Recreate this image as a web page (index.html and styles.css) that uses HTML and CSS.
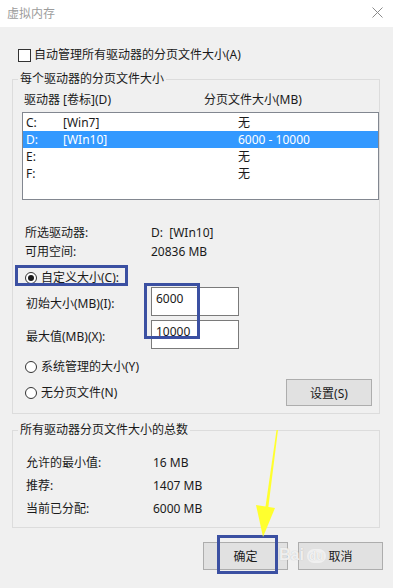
FILE: index.html
```html
<!DOCTYPE html>
<html lang="zh-CN">

<head>
    <meta charset="UTF-8">
    <meta name="viewport" content="width=device-width, initial-scale=1.0">
    <title>虚拟内存</title>
    <link rel="stylesheet" href="styles.css">
</head>

<body>
    <div class="titlebar">
        <span class="title">虚拟内存</span>
        <svg class="close" width="11" height="11" viewBox="0 0 11 11">
            <path d="M0.5 0.5 L10.5 10.5 M10.5 0.5 L0.5 10.5" stroke="#8a8a8a" stroke-width="1" fill="none" />
        </svg>
    </div>

    <div class="dialog">
        <div class="auto-row">
            <span class="checkbox"></span>
            <span>自动管理所有驱动器的分页文件大小(A)</span>
        </div>

        <fieldset class="group group-drives">
            <legend>每个驱动器的分页文件大小</legend>
            <div class="list-head">
                <span>驱动器 [卷标](D)</span>
                <span>分页文件大小(MB)</span>
            </div>
            <div class="listbox">
                <div class="list-row"><span>C:</span><span>[Win7]</span><span>无</span></div>
                <div class="list-row selected"><span>D:</span><span>[WIn10]</span><span>6000 - 10000</span></div>
                <div class="list-row"><span>E:</span><span></span><span>无</span></div>
                <div class="list-row"><span>F:</span><span></span><span>无</span></div>
            </div>

            <div class="info">
                <div class="info-row"><span>所选驱动器:</span><span>D:&nbsp; [WIn10]</span></div>
                <div class="info-row"><span>可用空间:</span><span>20836 MB</span></div>
            </div>

            <div class="radio-row first">
                <span class="radio checked"></span>
                <span>自定义大小(C):</span>
            </div>
            <div class="size-row">
                <span class="size-label">初始大小(MB)(I):</span>
                <div class="textbox">6000</div>
            </div>
            <div class="size-row second">
                <span class="size-label">最大值(MB)(X):</span>
                <div class="textbox">10000</div>
            </div>
            <div class="radio-row system">
                <span class="radio"></span>
                <span>系统管理的大小(Y)</span>
            </div>
            <div class="radio-row none">
                <span class="radio"></span>
                <span class="grow">无分页文件(N)</span>
                <button class="btn btn-set">设置(S)</button>
            </div>
        </fieldset>

        <fieldset class="group group-total">
            <legend>所有驱动器分页文件大小的总数</legend>
            <div class="totals">
                <div class="total-row"><span>允许的最小值:</span><span>16 MB</span></div>
                <div class="total-row"><span>推荐:</span><span>1407 MB</span></div>
                <div class="total-row"><span>当前已分配:</span><span>6000 MB</span></div>
            </div>
        </fieldset>

        <div class="actions">
            <button class="btn">确定</button>
            <button class="btn">取消</button>
        </div>
    </div>
    <div class="shadow"></div>

    <!-- annotations drawn over the screenshot -->
    <div class="mark mark-custom"></div>
    <div class="mark mark-sizes"></div>
    <div class="mark mark-ok"></div>
    <svg class="arrow" width="40" height="110" viewBox="0 0 40 110">
        <polygon points="26.5,0 28,0 18,80 15,80" fill="#ffff2e" />
        <polygon points="6,75 25,78 13,107" fill="#ffff2e" />
    </svg>
    <div class="watermark">Bai<span class="paw">du</span></div>
</body>

</html>
```

FILE: styles.css
```css
body {
    margin: 0;
    width: 393px;
    height: 588px;
    background-color: #f0f0f0;
    font-family: "Noto Sans", "Noto Sans CJK SC", sans-serif;
    font-size: 12px;
    color: #1a1a1a;
    position: relative;
    overflow: hidden;
}

.titlebar {
    height: 27px;
    background-color: #ffffff;
    display: flex;
    align-items: center;
    justify-content: space-between;
    padding: 0 10px 0 7px;
    box-sizing: border-box;
}

.title {
    color: #9c9c9c;
    line-height: 14px;
}

.close {
    display: block;
    margin-top: -3px;
}

.dialog {
    height: 556px;
    padding: 0 13px 0 12px;
    box-sizing: border-box;
}

.auto-row {
    margin-top: 21px;
    height: 14px;
    padding-left: 6px;
    display: flex;
    align-items: center;
    gap: 3px;
    line-height: 14px;
}

.checkbox {
    width: 13px;
    height: 13px;
    border: 1px solid #333;
    box-sizing: border-box;
    background-color: #fff;
}

/* group boxes */
.group {
    margin: 10px 0 0 0;
    padding: 0 0 7px 9px;
    border: 1px solid #dcdcdc;
    min-width: 0;
}

.group legend {
    padding: 0 2px;
    margin-left: -4px;
    line-height: 14px;
}

.list-head {
    margin-top: 7px;
    padding-left: 2px;
    line-height: 14px;
    display: grid;
    grid-template-columns: 180px 1fr;
}

.listbox {
    margin-top: 5px;
    height: 88px;
    border: 1px solid #828790;
    background-color: #ffffff;
    padding-top: 1px;
    box-sizing: border-box;
}

.list-row {
    height: 17px;
    line-height: 17px;
    padding-left: 3px;
    display: grid;
    grid-template-columns: 37px 175px 1fr;
}

.list-row.selected {
    background-color: #3399ff;
    color: #ffffff;
}

.info {
    margin-top: 23px;
}

.info-row {
    line-height: 19px;
    padding-left: 3px;
    display: grid;
    grid-template-columns: 126px 1fr;
}

.radio-row {
    height: 14px;
    line-height: 14px;
    padding-left: 3px;
    display: flex;
    align-items: center;
    gap: 4px;
}

.radio-row.first {
    margin-top: 10px;
}

.radio-row.system {
    margin-top: 11px;
}

.radio-row.none {
    margin-top: 5px;
    height: 27px;
}

.radio {
    width: 12px;
    height: 12px;
    border: 1px solid #333;
    border-radius: 50%;
    box-sizing: border-box;
    background-color: #fff;
    display: flex;
    align-items: center;
    justify-content: center;
}

.radio.checked::after {
    content: "";
    width: 6px;
    height: 6px;
    border-radius: 50%;
    background-color: #1a1a1a;
}

.grow {
    flex: 1;
}

.size-row {
    margin-top: 2px;
    height: 29px;
    padding-left: 4px;
    display: flex;
    align-items: center;
}

.size-row.second {
    margin-top: 4px;
}

.size-label {
    width: 125px;
    margin-top: 2px;
}

.textbox {
    width: 88px;
    height: 29px;
    border: 1px solid #7a7a7a;
    background-color: #fff;
    box-sizing: border-box;
    padding: 3px 0 0 4px;
    line-height: 16px;
}

.btn {
    font-family: inherit;
    font-size: 12px;
    color: #1a1a1a;
    background-color: #e1e1e1;
    border: 1px solid #adadad;
    padding: 0;
    width: 86px;
    height: 28px;
}

.btn-set {
    height: 27px;
    margin-right: 7px;
}

.totals {
    margin-top: 14px;
}

.total-row {
    line-height: 23px;
    padding-left: 4px;
    display: grid;
    grid-template-columns: 127px 1fr;
}

.group-total {
    margin-top: 9px;
}

.actions {
    margin: 14px -3px 0 0;
    display: flex;
    justify-content: flex-end;
    gap: 10px;
}

.actions .btn {
    width: 85px;
}

.shadow {
    height: 5px;
    background: linear-gradient(#c4c4c4, #9a9a9a);
}

/* annotation layer */
.mark {
    position: absolute;
    border: 3px solid #3b50a2;
    box-sizing: border-box;
}

.mark-custom {
    left: 15px;
    top: 265px;
    width: 113px;
    height: 21px;
}

.mark-sizes {
    left: 144px;
    top: 283px;
    width: 56px;
    height: 56px;
}

.mark-ok {
    left: 217px;
    top: 535px;
    width: 61px;
    height: 39px;
}

.arrow {
    position: absolute;
    left: 250px;
    top: 430px;
}

.watermark {
    position: absolute;
    left: 279px;
    top: 545px;
    font-family: "Liberation Sans", sans-serif;
    font-size: 16px;
    line-height: 20px;
    font-weight: bold;
    color: rgba(255, 255, 255, 0.8);
    text-shadow: 0 0 1px rgba(150, 150, 150, 0.6);
}

.paw {
    font-size: 12px;
    margin-left: 3px;
    padding: 0 2px;
    border-radius: 7px;
    background-color: rgba(255, 255, 255, 0.5);
}
```
